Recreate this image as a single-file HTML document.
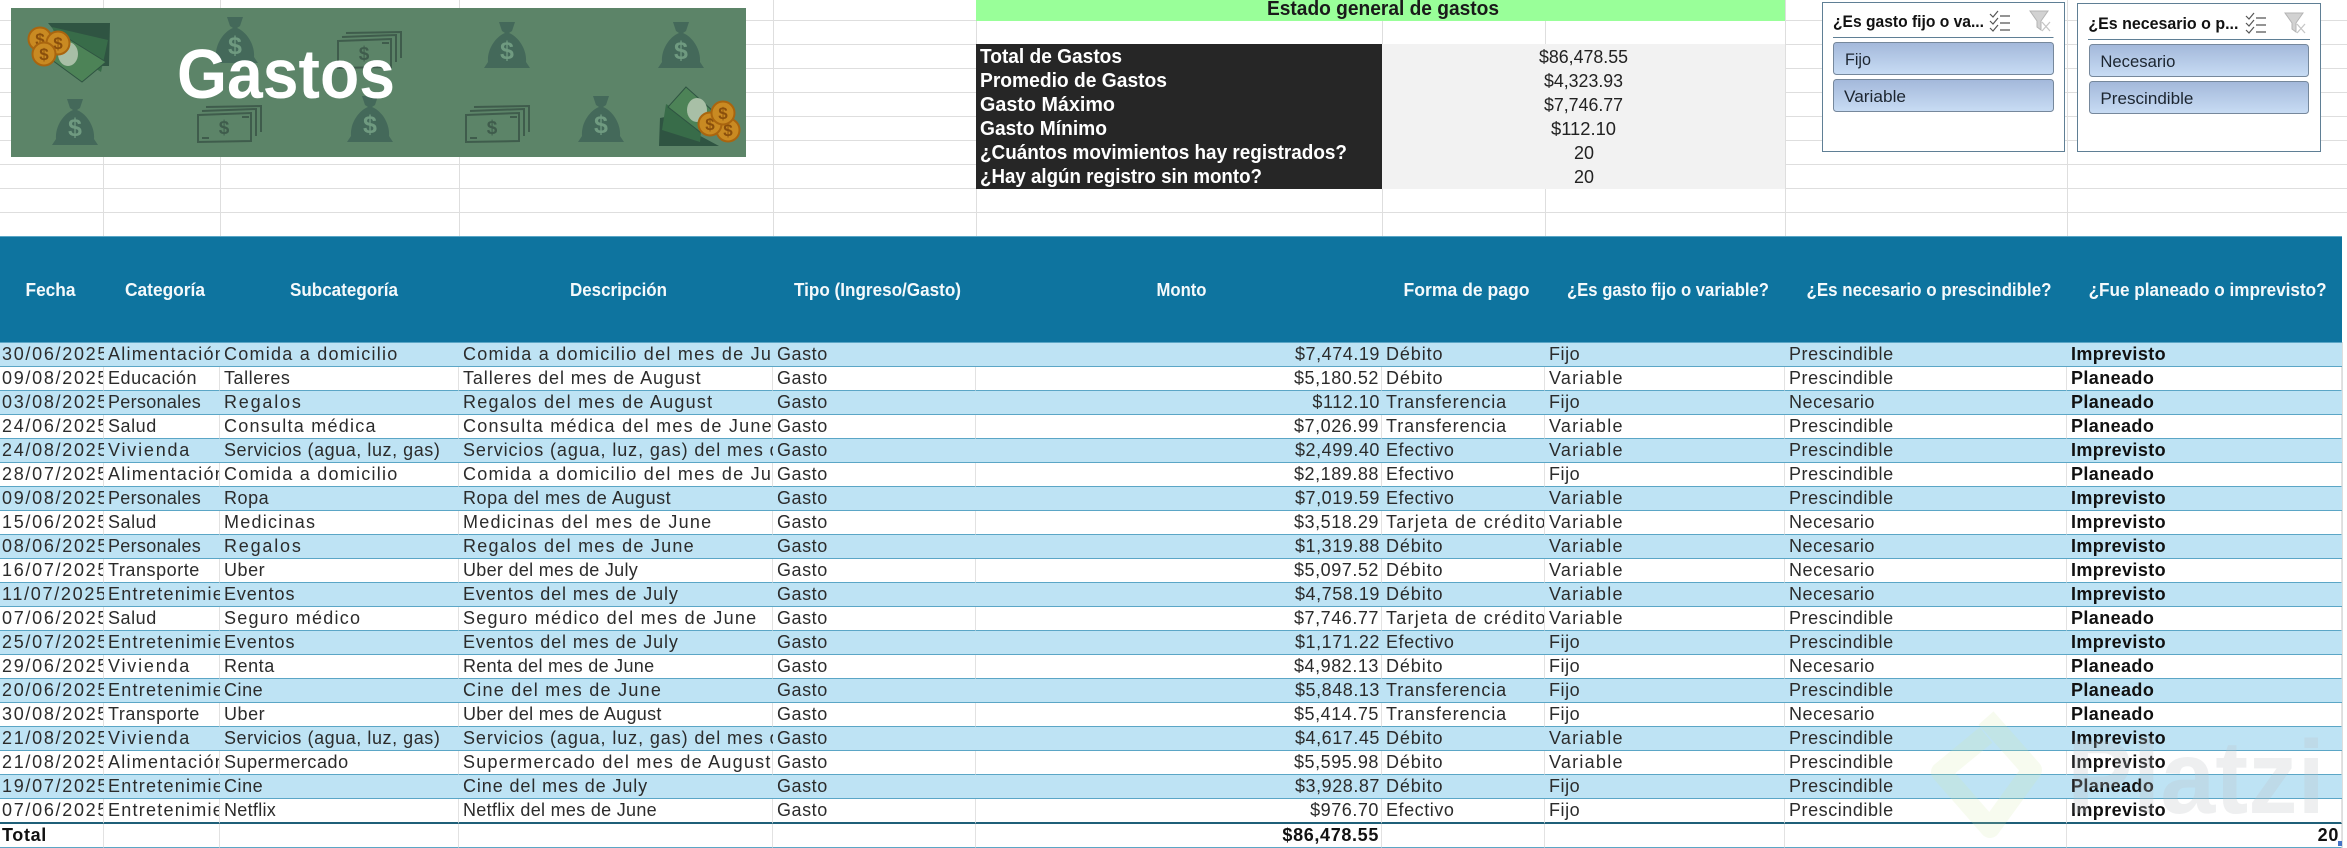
<!DOCTYPE html>
<html lang="es"><head><meta charset="utf-8"><title>Gastos</title>
<style>
html,body{margin:0;padding:0;background:#fff}
#p{position:relative;width:2347px;height:848px;overflow:hidden;background:#fff;font-family:"Liberation Sans",sans-serif}
svg{position:absolute;left:0;top:0}
svg text{font-family:"Liberation Sans",sans-serif}
table{position:absolute;left:0;top:343px;width:2342px;table-layout:fixed;border-collapse:separate;border-spacing:0;font-size:18px;color:#2b2b2b;letter-spacing:.55px}
td{height:23px;line-height:23px;padding:0 0 0 4px;border-bottom:1px solid #5ba6c6;white-space:nowrap;overflow:hidden;box-sizing:content-box}
tr:nth-child(odd) td{background:#bee3f4}
tr:nth-child(even) td{border-right:1px solid #e2e2e2}
td:nth-child(1){padding-left:2px;letter-spacing:1.7px}
td:nth-child(6){text-align:right;padding:0 2px 0 0}
td:nth-child(10){font-weight:bold;letter-spacing:.4px;color:#111}
td.x{letter-spacing:1.25px}
td.z{letter-spacing:.9px}
td.y{letter-spacing:.3px}
td.v{letter-spacing:1.8px}
tr.t td{background:#fff;border-bottom:1px solid #5ba6c6;border-right:1px solid #e2e2e2;font-weight:bold;color:#111;letter-spacing:.65px}
tr.l td{border-bottom:2px solid #1f5f78}
</style></head><body><div id="p">
<svg width="2347" height="848" viewBox="0 0 2347 848">
<defs>
<g id="bag"><path d="M15 0H31L28 9L25 11C35 15 43 28 42 40L46 46H0L4 40C3 28 11 15 21 11L18 9Z" fill="#44695a"/><text x="23" y="37" font-size="25" font-weight="bold" text-anchor="middle" fill="#6f9a80">$</text></g>
<g id="note" fill="none" stroke="#3f5c4c" stroke-width="2"><path d="M1 9L54 7V35L1 36Z"/><path d="M5 5L59 3V30"/><path d="M9 1L64 0V26"/><path d="M45 11H52M5 32H12"/><text x="27" y="28" font-size="19" font-weight="bold" text-anchor="middle" fill="#3f5c4c" stroke="none">$</text></g>
<g id="coin"><circle r="11.5" fill="#c98a22" stroke="#a9650f" stroke-width="2"/><text y="6" font-size="17" font-weight="bold" text-anchor="middle" fill="#8a4f0c">$</text></g>
</defs>
<g stroke="#dedede" stroke-width="1" shape-rendering="crispEdges">
<path d="M0 20.5H2347M0 44.5H2347M0 68.5H2347M0 92.5H2347M0 116.5H2347M0 140.5H2347M0 164.5H2347M0 188.5H2347M0 212.5H2347"/>
<path d="M103.5 0V236M220.5 0V236M459.5 0V236M773.5 0V236M976.5 0V236M1382.5 0V236M1545.5 0V236M1785.5 0V236M2067.5 0V236"/>
<path d="M2342.5 342V848"/>
</g>
<rect x="11" y="8" width="735" height="149" fill="#5c8468"/>
<use href="#bag" x="212" y="17"/><use href="#bag" x="484" y="22"/><use href="#bag" x="658" y="22"/>
<use href="#bag" x="52" y="99"/><use href="#bag" x="347" y="96"/><use href="#bag" x="578" y="96"/>
<use href="#note" x="337" y="32"/><use href="#note" x="197" y="106"/><use href="#note" x="465" y="106"/>
<polygon points="48,23 110,23 109,66 98,66 64,42" fill="#2f5442"/>
<polygon points="52,27 108,40 101,72 60,46" fill="#386c49"/>
<polygon points="56,31 106,62 82,82 52,60" fill="#4d8357" stroke="#2f5442" stroke-width="1"/>
<ellipse cx="68" cy="54" rx="10" ry="12" fill="#a8bfa6"/>
<use href="#coin" x="40" y="39"/><use href="#coin" x="58" y="43"/><use href="#coin" x="44" y="54"/>
<polygon points="665,117 719,146 659,146 660,118" fill="#2f5442"/>
<polygon points="666,104 702,124 700,142 662,130" fill="#386c49"/>
<polygon points="686,87 714,112 700,132 668,107" fill="#4d8357" stroke="#2f5442" stroke-width="1"/>
<ellipse cx="697" cy="110" rx="10" ry="12" fill="#a8bfa6"/>
<use href="#coin" x="728" y="130"/><use href="#coin" x="710" y="124"/><use href="#coin" x="723" y="113"/>
<text x="177" y="98" font-size="70" font-weight="bold" fill="#fff" textLength="218" lengthAdjust="spacingAndGlyphs">Gastos</text>
<rect x="976" y="0" width="809" height="21" fill="#99ff99"/>
<text x="1267" y="15" font-size="20" font-weight="bold" fill="#1a1a1a" textLength="232" lengthAdjust="spacingAndGlyphs">Estado general de gastos</text>
<rect x="976" y="44" width="406" height="145" fill="#262626"/>
<rect x="1382" y="44" width="403" height="145" fill="#f2f2f2"/>
<g fill="#fff" font-size="20" font-weight="bold">
<text x="980" y="63" textLength="142" lengthAdjust="spacingAndGlyphs">Total de Gastos</text>
<text x="980" y="87" textLength="187" lengthAdjust="spacingAndGlyphs">Promedio de Gastos</text>
<text x="980" y="111" textLength="135" lengthAdjust="spacingAndGlyphs">Gasto Máximo</text>
<text x="980" y="135" textLength="127" lengthAdjust="spacingAndGlyphs">Gasto Mínimo</text>
<text x="980" y="159" textLength="367" lengthAdjust="spacingAndGlyphs">¿Cuántos movimientos hay registrados?</text>
<text x="980" y="183" textLength="282" lengthAdjust="spacingAndGlyphs">¿Hay algún registro sin monto?</text>
</g>
<g fill="#222" font-size="18">
<text x="1539" y="63" textLength="89" lengthAdjust="spacingAndGlyphs">$86,478.55</text>
<text x="1544" y="87" textLength="79" lengthAdjust="spacingAndGlyphs">$4,323.93</text>
<text x="1544" y="111" textLength="79" lengthAdjust="spacingAndGlyphs">$7,746.77</text>
<text x="1551" y="135" textLength="65" lengthAdjust="spacingAndGlyphs">$112.10</text>
<text x="1574" y="159" textLength="20" lengthAdjust="spacingAndGlyphs">20</text>
<text x="1574" y="183" textLength="20" lengthAdjust="spacingAndGlyphs">20</text>
</g>
<linearGradient id="b" x1="0" y1="0" x2="0" y2="1"><stop offset="0" stop-color="#a3b8da"/><stop offset="1" stop-color="#c8dcf4"/></linearGradient>
<rect x="1822.5" y="2.5" width="242" height="149" fill="#fff" stroke="#5f7f95"/>
<text x="1833" y="27" font-size="17" font-weight="bold" fill="#111" textLength="151" lengthAdjust="spacingAndGlyphs">¿Es gasto fijo o va...</text>
<path d="M1833 37.5H2053.5" stroke="#5f7f95"/>
<rect x="1833.5" y="42.5" width="220" height="32" rx="3" fill="url(#b)" stroke="#76889c"/>
<rect x="1833.5" y="79.5" width="220" height="32" rx="3" fill="url(#b)" stroke="#76889c"/>
<text x="1845" y="65" font-size="17" fill="#1c2530" textLength="26" lengthAdjust="spacingAndGlyphs">Fijo</text>
<text x="1844" y="102" font-size="17" fill="#1c2530" textLength="62" lengthAdjust="spacingAndGlyphs">Variable</text>
<g fill="none" stroke="#555" stroke-width="1.2">
<path d="M1990 14L1993 17L1998 11M1990 21L1993 24L1998 18M1990 28L1993 31L1998 25"/>
<path d="M2000 16H2010M2000 23H2010M2000 30H2010"/>
</g>
<path d="M2030 11H2048L2041 21V30L2037 27V21Z" fill="#d2d2d2" stroke="#b4b4b4"/>
<path d="M2042 22L2050 31M2050 22L2042 31" stroke="#c6c6c6" stroke-width="1.3"/>
<rect x="2077.5" y="3.5" width="243" height="148" fill="#fff" stroke="#5f7f95"/>
<text x="2088.4" y="29" font-size="17" font-weight="bold" fill="#111" textLength="150" lengthAdjust="spacingAndGlyphs">¿Es necesario o p...</text>
<path d="M2088 39.5H2310" stroke="#5f7f95"/>
<rect x="2089.5" y="44.5" width="219" height="32" rx="3" fill="url(#b)" stroke="#76889c"/>
<rect x="2089.5" y="81.5" width="219" height="32" rx="3" fill="url(#b)" stroke="#76889c"/>
<text x="2100.4" y="67" font-size="17" fill="#1c2530" textLength="75" lengthAdjust="spacingAndGlyphs">Necesario</text>
<text x="2100.4" y="104" font-size="17" fill="#1c2530" textLength="93" lengthAdjust="spacingAndGlyphs">Prescindible</text>
<g fill="none" stroke="#555" stroke-width="1.2">
<path d="M2246 16L2249 19L2254 13M2246 23L2249 26L2254 20M2246 30L2249 33L2254 27"/>
<path d="M2256 18H2266M2256 25H2266M2256 32H2266"/>
</g>
<path d="M2285 13H2303L2296 23V32L2292 29V23Z" fill="#d2d2d2" stroke="#b4b4b4"/>
<path d="M2297 24L2305 33M2305 24L2297 33" stroke="#c6c6c6" stroke-width="1.3"/>
<rect x="0" y="236" width="2342" height="106" fill="#0e749f"/>
<path d="M0 236.5H2342M0 342.5H2342" stroke="#5ba6c6" shape-rendering="crispEdges"/>
<g fill="#f4f9fb" font-size="18" font-weight="bold">
<text x="25.5" y="296" textLength="50" lengthAdjust="spacingAndGlyphs">Fecha</text>
<text x="125" y="296" textLength="80" lengthAdjust="spacingAndGlyphs">Categoría</text>
<text x="290" y="296" textLength="108" lengthAdjust="spacingAndGlyphs">Subcategoría</text>
<text x="570" y="296" textLength="97" lengthAdjust="spacingAndGlyphs">Descripción</text>
<text x="794" y="296" textLength="167" lengthAdjust="spacingAndGlyphs">Tipo (Ingreso/Gasto)</text>
<text x="1156.5" y="296" textLength="50" lengthAdjust="spacingAndGlyphs">Monto</text>
<text x="1403.5" y="296" textLength="126" lengthAdjust="spacingAndGlyphs">Forma de pago</text>
<text x="1567" y="296" textLength="202" lengthAdjust="spacingAndGlyphs">¿Es gasto fijo o variable?</text>
<text x="1806.5" y="296" textLength="245" lengthAdjust="spacingAndGlyphs">¿Es necesario o prescindible?</text>
<text x="2088.6" y="296" textLength="238" lengthAdjust="spacingAndGlyphs">¿Fue planeado o imprevisto?</text>
</g>
</svg>
<table><colgroup><col style="width:104px"><col style="width:116px"><col style="width:239px"><col style="width:314px"><col style="width:203px"><col style="width:406px"><col style="width:163px"><col style="width:240px"><col style="width:282px"><col style="width:275px"></colgroup><tbody>
<tr><td>30/06/2025</td><td class="x">Alimentación</td><td class="x">Comida a domicilio</td><td class="x">Comida a domicilio del mes de June</td><td>Gasto</td><td>$7,474.19</td><td class="z">Débito</td><td>Fijo</td><td>Prescindible</td><td>Imprevisto</td></tr>
<tr><td>09/08/2025</td><td>Educación</td><td>Talleres</td><td class="z">Talleres del mes de August</td><td>Gasto</td><td>$5,180.52</td><td class="z">Débito</td><td class="x">Variable</td><td>Prescindible</td><td>Planeado</td></tr>
<tr><td>03/08/2025</td><td class="y">Personales</td><td class="v">Regalos</td><td class="x">Regalos del mes de August</td><td>Gasto</td><td>$112.10</td><td class="z">Transferencia</td><td>Fijo</td><td>Necesario</td><td>Planeado</td></tr>
<tr><td>24/06/2025</td><td>Salud</td><td class="x">Consulta médica</td><td class="x">Consulta médica del mes de June</td><td>Gasto</td><td>$7,026.99</td><td class="z">Transferencia</td><td class="x">Variable</td><td>Prescindible</td><td>Planeado</td></tr>
<tr><td>24/08/2025</td><td class="v">Vivienda</td><td>Servicios (agua, luz, gas)</td><td class="z">Servicios (agua, luz, gas) del mes de August</td><td>Gasto</td><td>$2,499.40</td><td>Efectivo</td><td class="x">Variable</td><td>Prescindible</td><td>Imprevisto</td></tr>
<tr><td>28/07/2025</td><td class="x">Alimentación</td><td class="x">Comida a domicilio</td><td class="x">Comida a domicilio del mes de July</td><td>Gasto</td><td>$2,189.88</td><td>Efectivo</td><td>Fijo</td><td>Prescindible</td><td>Planeado</td></tr>
<tr><td>09/08/2025</td><td class="y">Personales</td><td>Ropa</td><td>Ropa del mes de August</td><td>Gasto</td><td>$7,019.59</td><td>Efectivo</td><td class="x">Variable</td><td>Prescindible</td><td>Imprevisto</td></tr>
<tr><td>15/06/2025</td><td>Salud</td><td class="x">Medicinas</td><td class="x">Medicinas del mes de June</td><td>Gasto</td><td>$3,518.29</td><td class="x">Tarjeta de crédito</td><td class="x">Variable</td><td>Necesario</td><td>Imprevisto</td></tr>
<tr><td>08/06/2025</td><td class="y">Personales</td><td class="v">Regalos</td><td class="x">Regalos del mes de June</td><td>Gasto</td><td>$1,319.88</td><td class="z">Débito</td><td class="x">Variable</td><td>Necesario</td><td>Imprevisto</td></tr>
<tr><td>16/07/2025</td><td>Transporte</td><td>Uber</td><td class="y">Uber del mes de July</td><td>Gasto</td><td>$5,097.52</td><td class="z">Débito</td><td class="x">Variable</td><td>Necesario</td><td>Imprevisto</td></tr>
<tr><td>11/07/2025</td><td class="x">Entretenimiento</td><td class="z">Eventos</td><td class="z">Eventos del mes de July</td><td>Gasto</td><td>$4,758.19</td><td class="z">Débito</td><td class="x">Variable</td><td>Necesario</td><td>Imprevisto</td></tr>
<tr><td>07/06/2025</td><td>Salud</td><td class="x">Seguro médico</td><td class="x">Seguro médico del mes de June</td><td>Gasto</td><td>$7,746.77</td><td class="x">Tarjeta de crédito</td><td class="x">Variable</td><td>Prescindible</td><td>Planeado</td></tr>
<tr><td>25/07/2025</td><td class="x">Entretenimiento</td><td class="z">Eventos</td><td class="z">Eventos del mes de July</td><td>Gasto</td><td>$1,171.22</td><td>Efectivo</td><td>Fijo</td><td>Prescindible</td><td>Imprevisto</td></tr>
<tr><td>29/06/2025</td><td class="v">Vivienda</td><td>Renta</td><td class="y">Renta del mes de June</td><td>Gasto</td><td>$4,982.13</td><td class="z">Débito</td><td>Fijo</td><td>Necesario</td><td>Planeado</td></tr>
<tr><td>20/06/2025</td><td class="x">Entretenimiento</td><td>Cine</td><td class="x">Cine del mes de June</td><td>Gasto</td><td>$5,848.13</td><td class="z">Transferencia</td><td>Fijo</td><td>Prescindible</td><td>Planeado</td></tr>
<tr><td>30/08/2025</td><td>Transporte</td><td>Uber</td><td class="y">Uber del mes de August</td><td>Gasto</td><td>$5,414.75</td><td class="z">Transferencia</td><td>Fijo</td><td>Necesario</td><td>Planeado</td></tr>
<tr><td>21/08/2025</td><td class="v">Vivienda</td><td>Servicios (agua, luz, gas)</td><td class="z">Servicios (agua, luz, gas) del mes de August</td><td>Gasto</td><td>$4,617.45</td><td class="z">Débito</td><td class="x">Variable</td><td>Prescindible</td><td>Imprevisto</td></tr>
<tr><td>21/08/2025</td><td class="x">Alimentación</td><td>Supermercado</td><td class="x">Supermercado del mes de August</td><td>Gasto</td><td>$5,595.98</td><td class="z">Débito</td><td class="x">Variable</td><td>Prescindible</td><td>Imprevisto</td></tr>
<tr><td>19/07/2025</td><td class="x">Entretenimiento</td><td>Cine</td><td class="z">Cine del mes de July</td><td>Gasto</td><td>$3,928.87</td><td class="z">Débito</td><td>Fijo</td><td>Prescindible</td><td>Planeado</td></tr>
<tr class="l"><td>07/06/2025</td><td class="x">Entretenimiento</td><td class="y">Netflix</td><td class="y">Netflix del mes de June</td><td>Gasto</td><td>$976.70</td><td>Efectivo</td><td>Fijo</td><td>Prescindible</td><td>Imprevisto</td></tr>
<tr class="t"><td>Total</td><td></td><td></td><td></td><td></td><td>$86,478.55</td><td></td><td></td><td></td><td style="text-align:right;padding:0 2px 0 0">20</td></tr>
</tbody></table>
<svg width="2347" height="848" viewBox="0 0 2347 848" style="pointer-events:none">
<path d="M1986 718L2032 770L1990 828L1941 772L1986 735" fill="none" stroke="#d3e8a8" stroke-opacity=".18" stroke-width="20" stroke-linejoin="round"/>
<text x="2067" y="813" font-size="104" font-weight="bold" fill="#bfc3c6" fill-opacity=".26" textLength="258" lengthAdjust="spacingAndGlyphs">Platzi</text>
<rect x="2338" y="841" width="4" height="5" fill="#4472c4"/>
</svg>
</div></body></html>
